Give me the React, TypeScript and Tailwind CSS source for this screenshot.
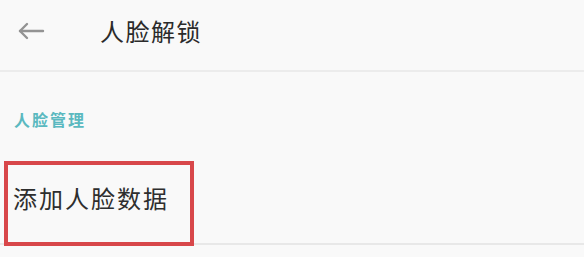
import React from "react";

export default function App() {
  return (
    <div
      className="w-[584px] h-[257px] bg-[#f9f9f9] overflow-hidden"
      style={{ fontFamily: '"Noto Sans CJK SC", "Noto Sans", sans-serif' }}
    >
      <div className="h-[72px] border-b-2 border-[#ececec]">
        <div className="h-[62px] flex items-center">
          <svg
            className="ml-[17px]"
            width="28"
            height="18"
            viewBox="0 0 28 18"
            fill="none"
            stroke="#939393"
            strokeWidth="2.4"
            strokeLinecap="round"
            strokeLinejoin="round"
          >
            <path d="M3 9H26" />
            <path d="M10 2L3 9L10 16" />
          </svg>
          <div className="ml-[55px] text-[24px] leading-[30px] tracking-[1.5px] text-[#2b2b2b]">
            人脸解锁
          </div>
        </div>
      </div>
      <div className="mt-[37px] pl-[14px] text-[16px] leading-[20px] tracking-[2px] font-bold text-[#5bb9c0]">
        人脸管理
      </div>
      <div className="relative mt-[30px] h-[86px] border-b-2 border-[#e8e8e8] flex items-center pb-[6px] pl-[13px]">
        <div className="text-[24px] leading-[30px] tracking-[2px] text-[#2e2e2e]">
          添加人脸数据
        </div>
        <div className="absolute left-[4px] top-[2px] w-[190px] h-[85px] border-4 border-[#d8474a]" />
      </div>
    </div>
  );
}
